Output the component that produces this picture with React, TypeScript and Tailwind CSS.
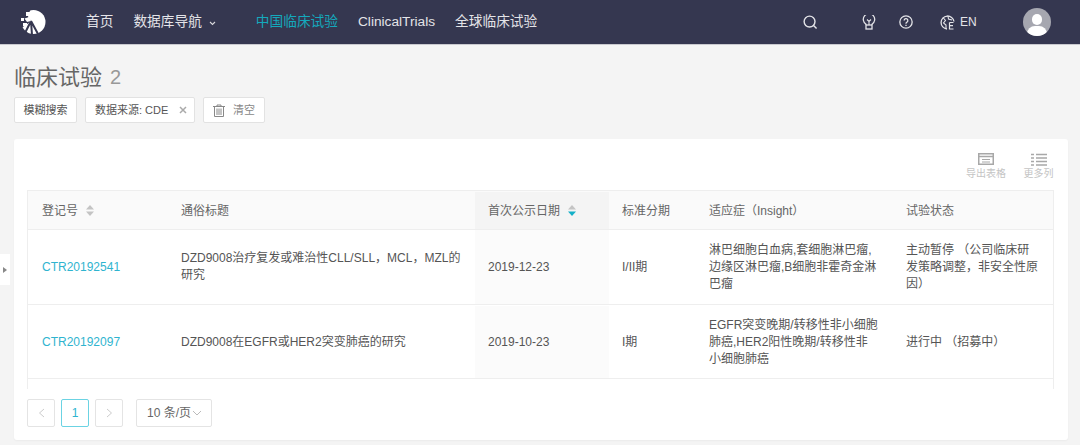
import React from "react";

const font = { fontFamily: '"Liberation Sans","Noto Sans CJK SC",sans-serif' };

function Sort({ active }: { active?: boolean }) {
  return (
    <svg width="8" height="11" viewBox="0 0 8 11" className="shrink-0">
      <path d="M4 0L8 4.5H0Z" fill="#c4c4c4" />
      <path d="M4 11L0 6.5H8Z" fill={active ? "#14b0c8" : "#c4c4c4"} />
    </svg>
  );
}

function Logo() {
  return (
    <svg width="26" height="26" viewBox="0 0 26 26">
      <circle cx="13.5" cy="13" r="12" fill="#fff" />
      <path d="M0 0H10.5L8 8L11 12L6 16L1 19L0 19Z" fill="#353750" />
      <path d="M11 12L5 24M11 12L12 26M11 12L18 25" stroke="#353750" strokeWidth="2" fill="none" />
      <rect x="6" y="3" width="4" height="4" fill="#fff" />
      <rect x="1" y="9" width="3" height="3" fill="#fff" />
      <path d="M4.5 9.5L9 8L11 12L7 13Z" fill="#fff" />
      <rect x="3" y="14" width="4" height="3" fill="#fff" />
    </svg>
  );
}

const headers = ["登记号", "通俗标题", "首次公示日期", "标准分期", "适应症（Insight）", "试验状态"];
const rows = [
  {
    id: "CTR20192541",
    title: "DZD9008治疗复发或难治性CLL/SLL，MCL，MZL的研究",
    date: "2019-12-23",
    phase: "I/II期",
    ind: "淋巴细胞白血病,套细胞淋巴瘤,边缘区淋巴瘤,B细胞非霍奇金淋巴瘤",
    status: "主动暂停 （公司临床研发策略调整，非安全性原因）",
  },
  {
    id: "CTR20192097",
    title: "DZD9008在EGFR或HER2突变肺癌的研究",
    date: "2019-10-23",
    phase: "I期",
    ind: "EGFR突变晚期/转移性非小细胞肺癌,HER2阳性晚期/转移性非小细胞肺癌",
    status: "进行中 （招募中）",
  },
];
const grid = "grid grid-cols-[140px_307px_134px_87px_197px_1fr]";

export default function App() {
  return (
    <div style={font} className="relative h-[445px] w-[1080px] overflow-hidden bg-[#f4f4f4] text-[#555]">
      <header className="flex h-[45px] items-center border-b border-[#c9c9cf] bg-[#353750] text-[13.7px] text-[#e4e4e8]">
        <div className="ml-[20px] flex w-[26px]"><Logo /></div>
        <nav className="ml-[40px] flex items-center pt-[1px]">
          <span>首页</span>
          <span className="ml-[20px] flex items-center">
            数据库导航
            <svg width="7" height="5" viewBox="0 0 7 5" className="ml-[7px] mt-[2px]"><path d="M1 1L3.5 3.5L6 1" fill="none" stroke="#d8d8dc" strokeWidth="1.1" /></svg>
          </span>
          <span className="ml-[40px] text-[#14a9bd]">中国临床试验</span>
          <span className="ml-[20px]">ClinicalTrials</span>
          <span className="ml-[20px]">全球临床试验</span>
        </nav>
        <div className="ml-auto flex items-center">
          <svg width="15" height="15" viewBox="0 0 16 16" fill="none" stroke="#e4e4e8" strokeWidth="1.5"><circle cx="7" cy="7" r="5.8" /><path d="M11 11L14.5 14.5" /></svg>
          <svg className="ml-[44px]" width="14" height="15" viewBox="0 0 14 15" fill="none" stroke="#e4e4e8" strokeWidth="1.3"><path d="M4 10V9.2A5.7 5.7 0 1 1 10 9.2V10" /><rect x="4" y="10" width="6" height="4" /><path d="M5 4.5L7 6.5L9 4.5M7 6.5V10" strokeWidth="1.1" /></svg>
          <svg className="ml-[23px]" width="14" height="14" viewBox="0 0 15 15" fill="none" stroke="#e4e4e8" strokeWidth="1.4"><circle cx="7.5" cy="7.5" r="6.6" /><path d="M5.5 6A2 2 0 1 1 8.3 7.8C7.7 8.1 7.5 8.5 7.5 9.3M7.5 10.5V11.8" /></svg>
          <svg className="ml-[27px]" width="15" height="15" viewBox="0 0 15 15" fill="none" stroke="#e4e4e8" strokeWidth="1.3"><path d="M7 14A6.5 6.5 0 1 1 14 6.5" /><path d="M3 2.5L5.5 5.5L3.5 8L6 10V13.5M8 1L8.5 4L12 5" strokeWidth="1.1" /><path d="M9.5 7.5H13.5M9.5 7.5V14H13.5M9.5 10.7H13" strokeWidth="1.2" /></svg>
          <span className="ml-[5px] w-[17px] text-[12px]">EN</span>
          <div className="relative ml-[46px] mr-[29px] h-[28px] w-[28px] overflow-hidden rounded-full bg-[#a6a7b0]">
            <div className="absolute left-[9px] top-[6px] h-[11px] w-[10px] rounded-full bg-white" />
            <div className="absolute left-[4px] top-[18px] h-[14px] w-[20px] rounded-t-[8px] bg-white" />
          </div>
        </div>
      </header>

      <div className="ml-[14px] mr-[12px]">
        <div className="mt-[18px] flex h-[28px] items-center">
          <h1 className="text-[22px] font-normal text-[#666]">临床试验</h1>
          <span className="ml-[8px] text-[20px] text-[#999]">2</span>
        </div>
        <div className="mt-[6px] flex h-[26px] gap-[8px] text-[11px] text-[#555]">
          <span className="flex w-[63px] items-center justify-center rounded-[2px] border border-[#e2e2e2] bg-white">模糊搜索</span>
          <span className="flex w-[110px] items-center rounded-[2px] border border-[#e2e2e2] bg-white pl-[9px]">
            数据来源: CDE
            <svg className="ml-[11px]" width="8" height="8" viewBox="0 0 8 8"><path d="M1 1L7 7M7 1L1 7" stroke="#aaa" strokeWidth="1.5" /></svg>
          </span>
          <span className="flex w-[62px] items-center rounded-[2px] border border-[#e2e2e2] bg-white pl-[9px] text-[#888]">
            <svg width="12" height="13" viewBox="0 0 12 13" fill="none" stroke="#888" strokeWidth="1"><path d="M0 2.5H12M4 2.5V1H8V2.5M1.5 2.5V12.5H10.5V2.5M4 4.5V11M6 4.5V11M8 4.5V11" /></svg>
            <span className="ml-[8px]">清空</span>
          </span>
        </div>

        <section className="mt-[16px] h-[301px] rounded-[3px] bg-white pl-[13px] pr-[14px] shadow-[0_1px_2px_rgba(0,0,0,0.04)]">
          <div className="flex h-[51px] justify-end pt-[14px] text-[10px] leading-[12px] text-[#c4c4c4]">
            <div className="flex w-[42px] flex-col items-center">
              <svg width="16" height="12" viewBox="0 0 16 12" fill="none"><rect x="0.75" y="0.75" width="14.5" height="10.5" stroke="#a8a8a8" strokeWidth="1.5" /><path d="M1 3.5H15" stroke="#a8a8a8" strokeWidth="1.5" /><path d="M4 6.5H12M4 9H12" stroke="#a8a8a8" /></svg>
              <span className="mt-[3px]">导出表格</span>
            </div>
            <div className="ml-[16px] flex w-[31px] flex-col items-center">
              <svg width="16" height="13" viewBox="0 0 16 13" stroke="#a8a8a8" strokeWidth="1.5"><path d="M0 1.5H3M5 1.5H16M0 5H3M5 5H16M0 8.5H3M5 8.5H16M0 12H3M5 12H16" /></svg>
              <span className="mt-[2px]">更多列</span>
            </div>
          </div>

          <div className="h-[199px] border-x border-[#eee] text-[12px] text-[#555]">
            <div className={`${grid} h-[40px] items-center border-b border-t border-[#eee] bg-[#fafafa] pt-[1px] text-[#666]`}>
              {headers.map((h, i) => (
                <div key={h} className={`flex h-full items-center ${i === 0 ? "pl-[14px]" : "pl-[13px]"} ${i === 2 ? "bg-[#f4f4f4]" : ""}`}>
                  <span>{h}</span>
                  {i === 0 && <span className="ml-[8px] flex"><Sort /></span>}
                  {i === 2 && <span className="ml-[8px] flex"><Sort active /></span>}
                </div>
              ))}
            </div>
            {rows.map((r, idx) => (
              <div key={r.id} className={`${grid} ${idx === 0 ? "h-[75px]" : "h-[74px] pt-[1px]"} items-center border-b border-[#eee] leading-[17px]`}>
                <div className="pl-[14px] text-[#2fb4cf]">{r.id}</div>
                <div className="pl-[13px] pr-[14px]">{r.title}</div>
                <div className="flex h-full items-center bg-[#fbfbfb] pl-[13px]">{r.date}</div>
                <div className="pl-[13px]">{r.phase}</div>
                <div className="pl-[13px] pr-[14px]">{r.ind}</div>
                <div className="pl-[13px] pr-[14px]">{r.status}</div>
              </div>
            ))}
          </div>

          <div className="mt-[10px] flex h-[28px] items-center text-[12px]">
            <span className="flex h-[28px] w-[28px] items-center justify-center rounded-[2px] border border-[#e4e4e4]">
              <svg width="7" height="10" viewBox="0 0 7 10" fill="none" stroke="#ccc"><path d="M6 1L1.5 5L6 9" /></svg>
            </span>
            <span className="ml-[6px] flex h-[28px] w-[28px] items-center justify-center rounded-[2px] border border-[#6bd3e3] text-[#2fb4cf]">1</span>
            <span className="ml-[6px] flex h-[28px] w-[28px] items-center justify-center rounded-[2px] border border-[#e4e4e4]">
              <svg width="7" height="10" viewBox="0 0 7 10" fill="none" stroke="#ccc"><path d="M1 1L5.5 5L1 9" /></svg>
            </span>
            <span className="ml-[13px] flex h-[28px] w-[76px] items-center rounded-[2px] border border-[#e4e4e4] pl-[10px] text-[#666]">
              10 条/页
              <svg className="ml-[1px]" width="10" height="6" viewBox="0 0 10 6" fill="none" stroke="#bbb"><path d="M1 1L5 5L9 1" /></svg>
            </span>
          </div>
        </section>
      </div>

      <div className="absolute left-0 top-[254px] flex h-[31px] w-[10px] items-center justify-center bg-white">
        <svg width="4" height="6" viewBox="0 0 4 6"><path d="M0 0L4 3L0 6Z" fill="#888" /></svg>
      </div>
    </div>
  );
}
